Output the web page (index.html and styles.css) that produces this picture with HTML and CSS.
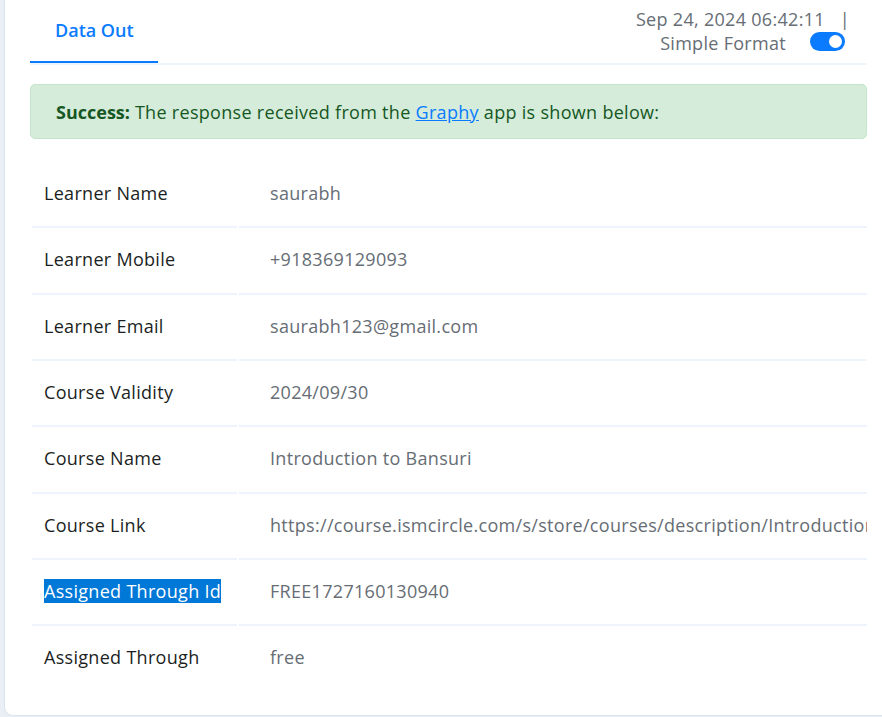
FILE: index.html
```html
<!DOCTYPE html>
<html lang="en">
<head>
<meta charset="utf-8">
<title>Data Out</title>
<link rel="stylesheet" href="styles.css">
</head>
<body>
<div class="card">
  <div class="content">
    <div class="header">
      <div class="tabs">
        <a class="tab active">Data Out</a>
      </div>
      <div class="meta">
        <div class="meta-date">Sep 24, 2024 06:42:11&nbsp;&nbsp;&nbsp;|</div>
        <div class="meta-format"><span>Simple Format</span><span class="toggle"><span class="knob"></span></span></div>
      </div>
    </div>
    <div class="alert"><strong>Success:</strong> The response received from the <a class="alert-link">Graphy</a> app is shown below:</div>
    <table class="data">
      <colgroup><col class="col-label"><col class="col-value"></colgroup>
      <tbody>
        <tr><td class="label">Learner Name</td><td class="value">saurabh</td></tr>
        <tr><td class="label">Learner Mobile</td><td class="value">+918369129093</td></tr>
        <tr><td class="label">Learner Email</td><td class="value">saurabh123@gmail.com</td></tr>
        <tr><td class="label">Course Validity</td><td class="value">2024/09/30</td></tr>
        <tr><td class="label">Course Name</td><td class="value">Introduction to Bansuri</td></tr>
        <tr><td class="label">Course Link</td><td class="value">https://course.ismcircle.com/s/store/courses/description/Introduction-to-Bansuri</td></tr>
        <tr><td class="label"><span class="selected">Assigned Through Id</span></td><td class="value">FREE1727160130940</td></tr>
        <tr><td class="label">Assigned Through</td><td class="value">free</td></tr>
      </tbody>
    </table>
  </div>
</div>
</body>
</html>
```

FILE: styles.css
```css
html, body {
  margin: 0;
  padding: 0;
  height: 717px;
  overflow: hidden;
  background: #eaeff6;
  font-family: "Open Sans", "Liberation Sans", sans-serif;
  font-size: 18px;
  letter-spacing: 0.3px;
}

.card {
  box-sizing: border-box;
  height: 716px;
  margin-left: 4px;
  background: #ffffff;
  border-left: 1px solid #dbe3ee;
  border-bottom: 1px solid #dbe3ee;
  border-bottom-left-radius: 9px;
  padding: 0 15px 0 25px;
}

.content {
  overflow: hidden;
}

.header {
  display: flex;
  justify-content: space-between;
  align-items: flex-start;
  border-bottom: 2px solid #edf4fd;
}

.tabs {
  display: flex;
}

.tab {
  display: block;
  padding: 18px 24px 19px 25px;
  line-height: 24px;
  font-weight: 600;
  letter-spacing: 0;
  color: #0a7bff;
  border-bottom: 2px solid transparent;
}

.tab.active {
  border-bottom-color: #0a7bff;
}

.meta {
  padding-top: 7px;
  padding-right: 17px;
  text-align: right;
  color: #666d74;
  line-height: 24px;
}

.meta-format {
  display: flex;
  align-items: center;
  justify-content: flex-end;
  gap: 24px;
  padding-right: 5px;
}

.toggle {
  position: relative;
  display: inline-block;
  width: 35px;
  height: 19px;
  border-radius: 10px;
  background: #0a7bff;
  margin-top: -4px;
}

.knob {
  position: absolute;
  right: 3px;
  top: 3px;
  width: 13px;
  height: 13px;
  border-radius: 50%;
  background: #ffffff;
}

.alert {
  margin-top: 19px;
  padding: 15px 25px 14px;
  line-height: 24px;
  background: #d4ecd9;
  border: 1px solid #c3e5ca;
  border-radius: 5px;
  color: #165724;
}

.alert strong {
  font-weight: 700;
  letter-spacing: 0;
}

.alert-link {
  color: #0a7bff;
  text-decoration: underline;
}

.data {
  margin-top: 23px;
  width: calc(100% + 2px);
  table-layout: fixed;
  border-collapse: separate;
  border-spacing: 2px 0;
}

.col-label {
  width: 205px;
}

.data td {
  padding: 19px 0 21px;
  line-height: 24.33px;
  border-bottom: 2px solid #edf4fd;
  white-space: nowrap;
  overflow: hidden;
}

.data tr:last-child td {
  border-bottom: none;
}

.label {
  padding-left: 12px !important;
  color: #1b1f23;
}

.value {
  padding-left: 31px !important;
  color: #666d74;
}

.selected {
  background: #0078d7;
  color: #ffffff;
}
```
